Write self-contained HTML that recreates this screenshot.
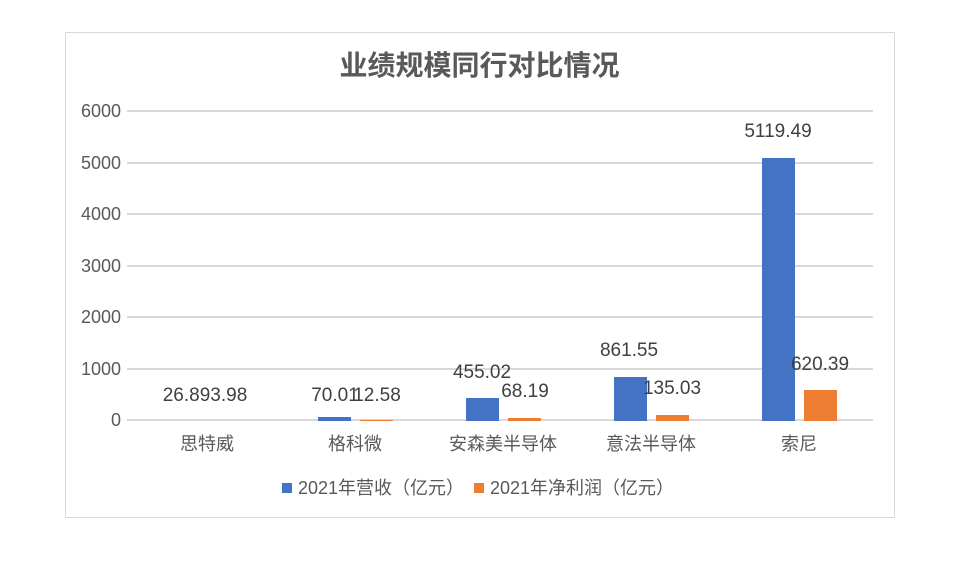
<!DOCTYPE html>
<html><head><meta charset="utf-8"><style>
body{margin:0;width:955px;height:566px;background:#fff;position:relative;overflow:hidden;font-family:"Liberation Sans","Noto Sans CJK SC",sans-serif;color:#404040}
.a{position:absolute}
.g{position:absolute;left:127px;width:746px;height:2px;background:#d9d9d9}
.y{position:absolute;right:834px;font-size:18px;line-height:20px;color:#595959}
.b{position:absolute;width:33px;bottom:145px}
.bl{background:#4472c4}.or{background:#ed7d31}
.l{position:absolute;font-size:19px;line-height:22px;transform:translateX(-50%);white-space:nowrap}
.c{position:absolute;top:433px;font-size:18px;line-height:22px;color:#595959;transform:translateX(-50%);white-space:nowrap}
</style></head><body>
<div class="a" style="left:65px;top:32px;width:828px;height:484px;border:1px solid #d9d9d9"></div>
<div class="a" style="left:0;width:955px;top:49px;text-align:center;font-size:28px;font-weight:bold;color:#595959;line-height:34px;padding-left:2px">业绩规模同行对比情况</div>
<div class="g" style="top:110px"></div><div class="g" style="top:162px"></div><div class="g" style="top:213px"></div><div class="g" style="top:265px"></div><div class="g" style="top:316px"></div><div class="g" style="top:368px"></div><div class="g" style="top:419px"></div>
<div class="y" style="top:101px">6000</div><div class="y" style="top:153px">5000</div><div class="y" style="top:204px">4000</div><div class="y" style="top:256px">3000</div><div class="y" style="top:307px">2000</div><div class="y" style="top:359px">1000</div><div class="y" style="top:410px">0</div>
<div class="b bl" style="left:318px;height:4px"></div><div class="b or" style="left:360px;height:1px"></div>
<div class="b bl" style="left:466px;height:23px"></div><div class="b or" style="left:508px;height:3px"></div>
<div class="b bl" style="left:614px;height:44px"></div><div class="b or" style="left:656px;height:6px"></div>
<div class="b bl" style="left:762px;height:263px"></div><div class="b or" style="left:804px;height:31px"></div>
<div class="l" style="left:205px;top:385px">26.893.98</div>
<div class="l" style="left:335px;top:385px">70.01</div><div class="l" style="left:377px;top:385px">12.58</div>
<div class="l" style="left:482px;top:362px">455.02</div><div class="l" style="left:525px;top:381px">68.19</div>
<div class="l" style="left:629px;top:340px">861.55</div><div class="l" style="left:672px;top:378px">135.03</div>
<div class="l" style="left:778px;top:121px">5119.49</div><div class="l" style="left:820px;top:354px">620.39</div>
<div class="c" style="left:207px">思特威</div><div class="c" style="left:355px">格科微</div><div class="c" style="left:503px">安森美半导体</div><div class="c" style="left:651px">意法半导体</div><div class="c" style="left:799px">索尼</div>
<div class="a" style="left:282px;top:483px;width:10px;height:10px;background:#4472c4"></div>
<div class="a" style="left:298px;top:477px;font-size:18px;line-height:22px;color:#595959">2021年营收（亿元）</div>
<div class="a" style="left:474px;top:483px;width:10px;height:10px;background:#ed7d31"></div>
<div class="a" style="left:490px;top:477px;font-size:18px;line-height:22px;color:#595959">2021年净利润（亿元）</div>
</body></html>
